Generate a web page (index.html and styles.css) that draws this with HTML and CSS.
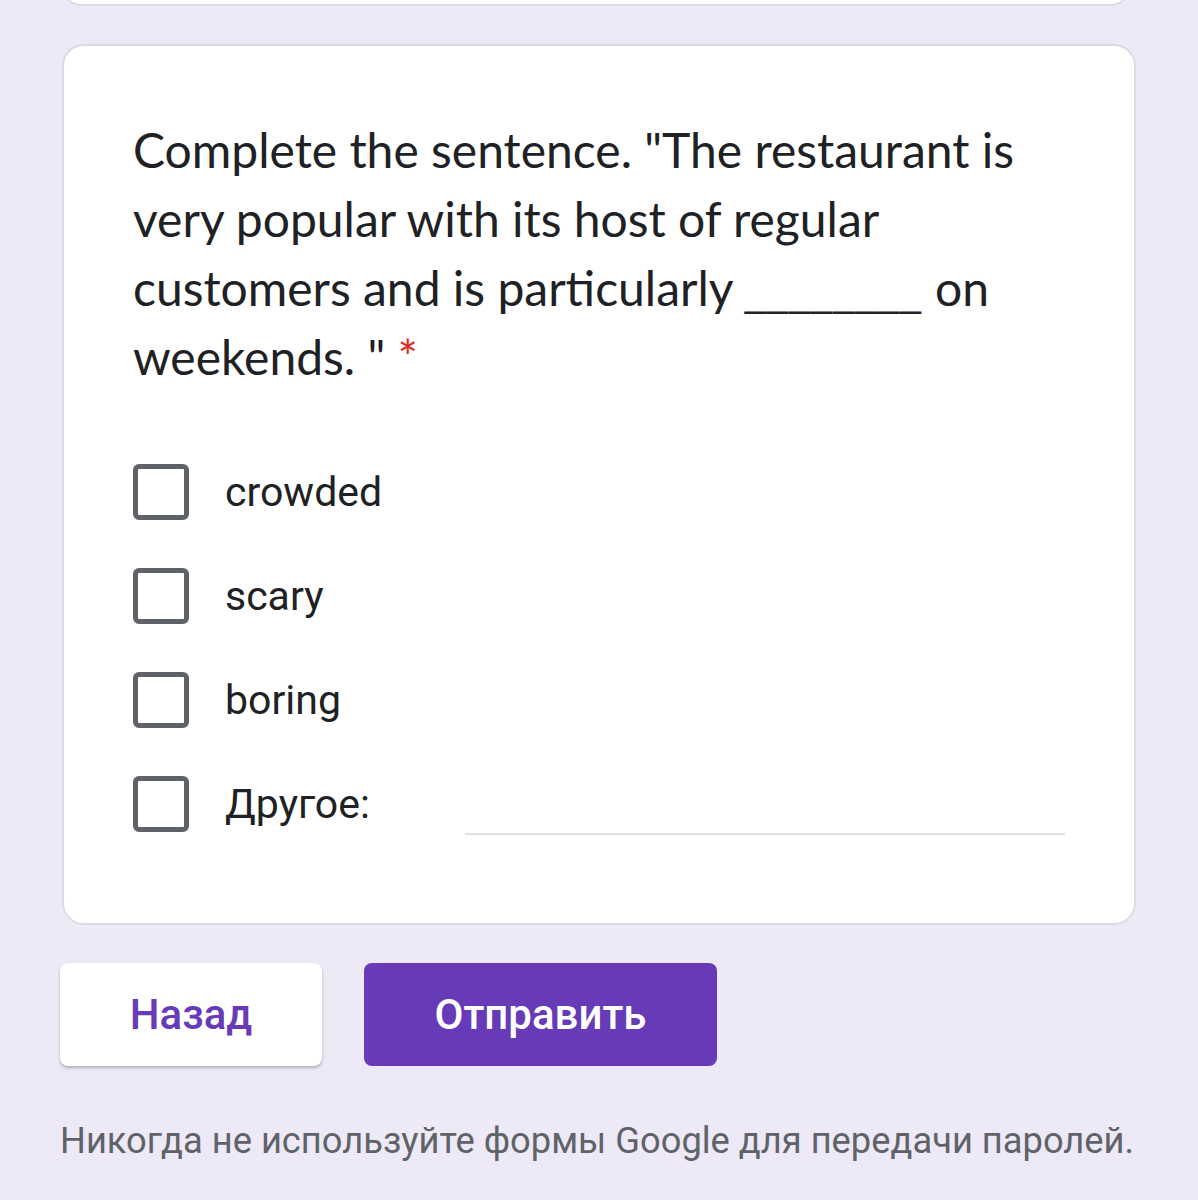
FILE: index.html
```html
<!DOCTYPE html>
<html lang="en">
<head>
<meta charset="utf-8">
<title>Form</title>
<link rel="stylesheet" href="styles.css">
</head>
<body>
<div class="page">
  <div class="card card-prev"></div>
  <div class="card question-card">
    <div class="question">Complete the sentence. "The restaurant is very popular with its host of regular customers and is particularly <span class="blank">________</span> on weekends. " <span class="req">*</span></div>
    <div class="options">
      <div class="option"><span class="box"></span><span class="label">crowded</span></div>
      <div class="option"><span class="box"></span><span class="label">scary</span></div>
      <div class="option"><span class="box"></span><span class="label">boring</span></div>
      <div class="option"><span class="box"></span><span class="label">Другое:</span><span class="other-input"></span></div>
    </div>
  </div>
  <div class="buttons">
    <button class="btn btn-back">Назад</button>
    <button class="btn btn-submit">Отправить</button>
  </div>
  <div class="footer">Никогда не используйте формы Google для передачи паролей.</div>
</div>
</body>
</html>
```

FILE: styles.css
```css
html, body {
  margin: 0;
  padding: 0;
  background: #ede9f7;
}
.page {
  padding: 0 62px 0 62px;
  height: 1200px;
  overflow: hidden;
  font-family: Roboto, "Liberation Sans", sans-serif;
}
.card {
  background: #fff;
  border: 2px solid #dcdae2;
  border-radius: 22px;
}
.card-prev {
  height: 40px;
  margin-top: -38px;
  margin-left: -2px;
  margin-right: 4px;
}
.question-card {
  margin-top: 38px;
  height: 881px;
  box-sizing: border-box;
  padding: 69px 69px 0 69px;
}
.question {
  font-family: Lato, "Open Sans", sans-serif;
  font-size: 48px;
  line-height: 69px;
  color: #202124;
}
.blank {
  font-family: "Liberation Sans", sans-serif;
  font-size: 38px;
  line-height: 1;
  letter-spacing: 1px;
  margin-right: 1px;
}
.req {
  color: #d93025;
}
.options {
  margin-top: 49px;
  display: flex;
  flex-direction: column;
}
.option {
  height: 104px;
  display: flex;
  align-items: center;
}
.box {
  width: 56px;
  height: 56px;
  box-sizing: border-box;
  border: 5px solid #5f6368;
  border-radius: 6px;
  flex: none;
}
.label {
  margin-left: 36px;
  font-size: 41px;
  color: #202124;
}
.other-input {
  flex: 1;
  margin-left: 95px;
  height: 60px;
  border-bottom: 2px solid #e0e0e0;
}
.buttons {
  margin-top: 38px;
  display: flex;
  gap: 42px;
  margin-left: -2px;
}
.btn {
  height: 103px;
  border: none;
  border-radius: 8px;
  font-family: Roboto, "Liberation Sans", sans-serif;
  font-weight: 500;
  font-size: 42px;
  padding: 0;
}
.btn-back {
  width: 262px;
  background: #fff;
  color: #673ab7;
  box-shadow: 0 2px 3px rgba(60, 64, 67, 0.35);
}
.btn-submit {
  width: 353px;
  background: #673ab7;
  color: #fff;
}
.footer {
  margin-top: 51px;
  margin-left: -2px;
  font-size: 36.3px;
  line-height: 48px;
  color: #5f6368;
}
```
